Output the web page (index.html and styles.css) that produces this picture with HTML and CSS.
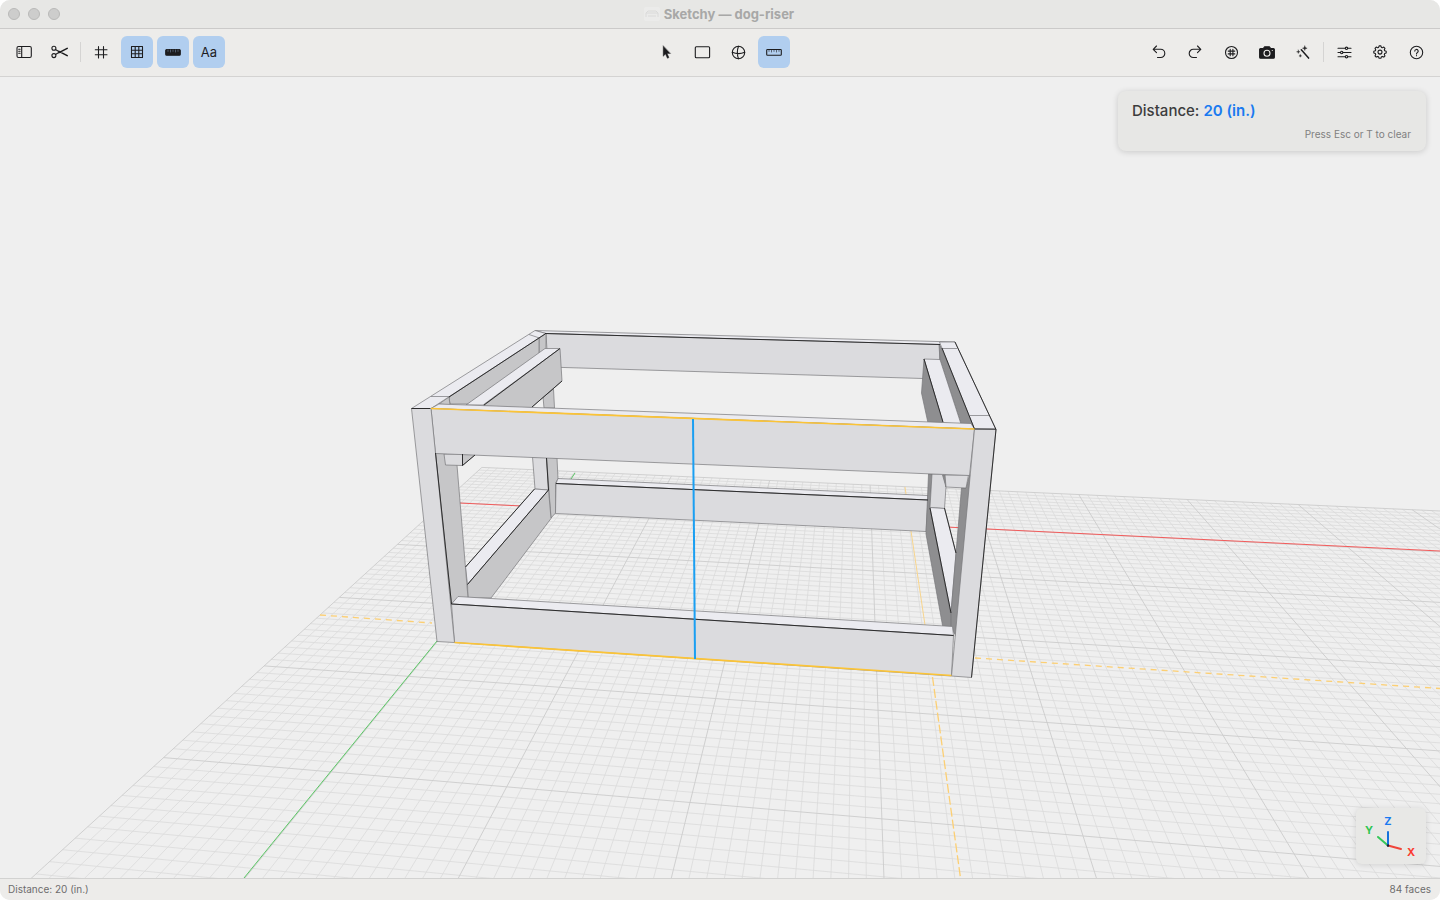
FILE: index.html
```html
<!DOCTYPE html>
<html lang="en">
<head>
<meta charset="utf-8">
<title>Sketchy — dog-riser</title>
<link rel="stylesheet" href="styles.css">
</head>
<body>
<div class="window">
  <header class="titlebar">
    <div class="lights">
      <button class="light" type="button" aria-label="Close"></button>
      <button class="light" type="button" aria-label="Minimize"></button>
      <button class="light" type="button" aria-label="Zoom"></button>
    </div>
    <h1 class="title">
      <svg class="doc-icon" viewBox="0 0 16 14" aria-hidden="true"><rect width="16" height="14" rx="2" fill="#ebebea"/><path d="M2 10V6l2-2h8l2 2v4M2 6h12M4 9h8" fill="none" stroke="#dadad9"/></svg>
      <span>Sketchy — dog-riser</span>
    </h1>
  </header>

  <nav class="toolbar" aria-label="Tools">
    <div class="tools">
      <button class="tool" type="button" aria-label="Sidebar"><svg class="icon" viewBox="0 0 20 20"><rect x="3" y="4.500" width="14.300" height="11" rx="1.500"/><path d="M7.700 4.500v11M4.700 7.200h1.400M4.700 9.200h1.400M4.700 11.200h1.400"/></svg></button>
      <button class="tool" type="button" aria-label="Cut"><svg class="icon" viewBox="0 0 20 20"><circle cx="3.900" cy="6.300" r="2"/><circle cx="3.900" cy="13.600" r="2"/><path d="M5.500 7.500 10 10.200M5.500 12.500 10 9.800"/><path d="m9 10.600 8.200-4.200M9 9.400l8.200 4.200" stroke-width="1.600"/></svg></button>
      <span class="divider"></span>
      <button class="tool" type="button" aria-label="Snap to grid"><svg class="icon" viewBox="0 0 20 20"><path d="M7.500 4.500v11.500M12.500 4.500v11.500M4.300 7.700h11.700M4.300 12.700h11.700"/></svg></button>
      <button class="tool tool-on" type="button" aria-pressed="true" aria-label="Grid"><svg class="icon" viewBox="0 0 20 20"><path d="M4.500 4.500h11v11h-11zM8.200 4.500v11M11.800 4.500v11M4.500 8.200h11M4.500 11.800h11"/></svg></button>
      <button class="tool tool-on" type="button" aria-pressed="true" aria-label="Dimensions"><svg class="icon" viewBox="0 0 20 20"><rect x="2.700" y="7.500" width="14.600" height="5.800" rx="1" fill="#1d1d1f"/><path d="M5 8v1.400M7.500 8v2M10 8v1.400M12.500 8v2M15 8v1.400" stroke="#7287a0" stroke-width=".6"/></svg></button>
      <button class="tool tool-on tool-text" type="button" aria-pressed="true">Aa</button>
    </div>
    <div class="tools">
      <button class="tool" type="button" aria-label="Select"><svg class="icon" viewBox="0 0 20 20"><path d="M7.200 4v10.300l2.300-2.200 1.900 4.200 1.600-.7-1.900-4.100h3.200z" fill="#1d1d1f" stroke="#1d1d1f" stroke-width=".4"/></svg></button>
      <button class="tool" type="button" aria-label="Rectangle"><svg class="icon" viewBox="0 0 20 20"><rect x="3.300" y="4.700" width="14.300" height="11" rx="1"/></svg></button>
      <button class="tool" type="button" aria-label="Orbit"><svg class="icon" viewBox="0 0 20 20"><circle cx="10.500" cy="10.500" r="6.200"/><path d="M10.500 4.300c-1.400 3.700-1.400 8.700 0 12.400M4.300 10.200c3.700 1.700 8.700 1.700 12.400 0"/></svg></button>
      <button class="tool tool-on" type="button" aria-pressed="true" aria-label="Measure"><svg class="icon" viewBox="0 0 20 20"><rect x="2.700" y="7.500" width="14.600" height="5.800" rx=".8"/><path d="M5 8v1.400M7.500 8v2M10 8v1.400M12.500 8v2M15 8v1.400" stroke-width=".6"/></svg></button>
    </div>
    <div class="tools tools-end">
      <button class="tool" type="button" aria-label="Undo"><svg class="icon" viewBox="0 0 20 20"><path d="M7.500 4 4.200 7.300l3.300 3.300M4.500 7.300h7.200a4 4 0 0 1 0 8.200H8.500"/></svg></button>
      <button class="tool" type="button" aria-label="Redo"><svg class="icon" viewBox="0 0 20 20"><path d="m12.500 4 3.300 3.300-3.300 3.300M15.500 7.300H8.300a4 4 0 0 0 0 8.200h3.200"/></svg></button>
      <button class="tool" type="button" aria-label="Units"><svg class="icon" viewBox="0 0 20 20"><circle cx="10.500" cy="10.500" r="6"/><path d="M9.200 7.200v6.600M11.900 7.200v6.600M7.200 9.100h6.600M7.200 11.900h6.600"/></svg></button>
      <button class="tool" type="button" aria-label="Camera"><svg class="icon" viewBox="0 0 20 20"><path d="M3.600 6.500h2.700l1.300-1.800h4.800l1.300 1.800h2.700a1 1 0 0 1 1 1v7.800a1 1 0 0 1-1 1H3.600a1 1 0 0 1-1-1V7.500a1 1 0 0 1 1-1z" fill="#1d1d1f"/><circle cx="10" cy="11.200" r="3" stroke="#edecea" stroke-width="1.100"/><circle cx="15.300" cy="8.500" r=".6" fill="#edecea" stroke="none"/></svg></button>
      <button class="tool" type="button" aria-label="Magic wand"><svg class="icon" viewBox="0 0 20 20"><path d="m8.300 7.800 7.300 8.300" stroke-width="1.500"/><path d="M11.800 3.800 12.400 5.600 14.200 6.200 12.400 6.800 11.800 8.600 11.200 6.800 9.400 6.200 11.200 5.600zM5.300 8l.4 1.400 1.400.4-1.400.4-.4 1.400-.4-1.400-1.400-.4 1.400-.4zM7.300 12.500l.3 1.100 1.100.3-1.100.3-.3 1.100-.3-1.100-1.100-.3 1.100-.3z" fill="#1d1d1f" stroke="#1d1d1f" stroke-width=".3"/></svg></button>
      <span class="divider"></span>
      <button class="tool" type="button" aria-label="Options"><svg class="icon" viewBox="0 0 20 20"><path d="M4 6.300h7.200M13.800 6.300H17M4 10.500h2.400M9 10.500h8M4 14.700h7.200M13.800 14.700H17"/><circle cx="12.500" cy="6.300" r="1.200"/><circle cx="7.700" cy="10.500" r="1.200"/><circle cx="12.500" cy="14.700" r="1.200"/></svg></button>
      <button class="tool" type="button" aria-label="Settings"><svg class="icon" viewBox="0 0 20 20"><circle cx="10" cy="10.100" r="2"/><path d="m8.600 5.400.5-1.500h1.800l.5 1.500 1 .4 1.400-.7 1.200 1.200-.7 1.400.4 1 1.500.5v1.800l-1.500.5-.4 1 .7 1.400-1.200 1.200-1.400-.7-1 .4-.5 1.500H9.100l-.5-1.500-1-.4-1.400.7L5 13.900l.7-1.400-.4-1L3.800 11V9.200l1.500-.5.4-1L5 6.300l1.200-1.200 1.400.7z"/></svg></button>
      <button class="tool" type="button" aria-label="Help"><svg class="icon" viewBox="0 0 20 20"><circle cx="10.500" cy="10.500" r="6.200"/><path d="M8.800 9.100a1.700 1.700 0 1 1 2.500 1.500c-.6.400-.8.700-.8 1.300M10.500 13.500v.3"/></svg></button>
    </div>
  </nav>

  <main class="viewport">
    <svg class="scene" viewBox="0 77 1440 801" preserveAspectRatio="xMidYMid slice" role="img" aria-label="3D model of a dog riser frame">
      <path id="grid-minor" class="grid-minor"/>
      <path id="grid-major" class="grid-major"/>
      <path class="axis-x" d="M459 503 522 506M946 527 1440 551"/>
      <path class="axis-y" d="M437 641 244 878M575 473 571 479"/>
      <path class="guide" d="M320 615 432 623M975 658 1440 688.500"/>
      <path class="guide guide-near" d="M932.500 677 960.500 878"/>
      <path class="guide-faint" d="M911 531 925 625M905 487 906 494"/>

      <g class="solid">
        <path class="top" d="M535 330.500 955 342 940 345 546 333.500z"/>
        <path class="front" d="M546 333.500 940 344.500 939 379 548 367z"/>
        <path class="left" d="M539 338 546 333.500V349L539 355z"/>
        <path class="left" d="M543 397 553.500 389 554.500 408 544 408z"/>
        <path class="left" d="M539 338 449 397 450 404H468L539 354z"/>
        <path class="left" d="M439 404 449 397 450 405z"/>
        <path class="top" d="M535 330.500 546 333.500 431 408.500 411.500 408.500z"/>
        <path class="top" d="M545 348.500H560L483 405H466z"/>
        <path class="left" d="M560 348.500 562 381 531 408 483 406z"/>

        <path class="right" d="M939 345 941 347 975 428 961 424 940 360z"/>
        <path class="top" d="M924 359 940 359.500 961 424 943 423z"/>
        <path class="right" d="M924 359 943 423H928L921.500 393z"/>
        <path class="top" d="M939.500 342H955L996 429.500 974.500 429z"/>

        <path class="front" d="M532.500 457 546.500 457 548.500 490 535 489z"/>
        <path class="left" d="M546.500 457 557 458 558 479 555.500 483V513L551 518z"/>
        <path class="top" d="M558 478.500 928 495.500V500L556 483.500z"/>
        <path class="front" d="M556 483.500 928 500 926 531.500 555.500 513.500z"/>
        <path class="top" d="M465.500 567 534.500 489 548.500 490 467.500 584.500z"/>
        <path class="left" d="M467.500 584.500 548.500 490 551 518.500 491 598H468z"/>

        <path class="right" d="M928.500 474H932L930 508 950.500 613V628H943L926 534z"/>
        <path class="front" d="M932 474H944L946 487 944.500 508.500 930 507.500z"/>
        <path class="top" d="M930 507.500 944.500 508.500 956 553.500 951 613z"/>
        <path class="right" d="M961.500 488 966 488 969.500 475 976 475 956 636 951 628V613L956 553z"/>
        <path class="right" d="M942.500 475H946V487z"/>
        <path class="front" d="M945 475H968.500L966 488 946 487z"/>

        <path class="left" d="M435.500 453H456L468 598H458L451.500 604z"/>
        <path class="left" d="M462 454H476L462.500 465.500z"/>
        <path class="front" d="M444 454H462.500V465.500L445.500 465z"/>

        <path class="top" d="M451.500 604 458 596.500 952.500 626.500 953.500 635.500z"/>
        <path class="front" d="M451.500 604 953.500 635.500 951.500 676 454.500 642.500z"/>
        <path class="top" d="M431 408.500 439 404 971 423.500 974.500 429z"/>
        <path class="front" d="M431 408.500 974.500 429 969.500 475.500 435.500 453.500z"/>
        <path class="front" d="M411.500 408.500H431L454.500 642.500 437 641.500z"/>
        <path class="front" d="M974.500 429 996 429.500 971.500 677.500 951.500 676z"/>
      </g>
      <path class="seam" d="M431 396.500H449.500M529 334.500 539.500 338M942.500 348.500H957M970 415.500H989.500"/>
      <path class="edge" d="M545 333.500 940 344.500M411.500 408.500H430M545 334 449 397M560 348.500 484 405M942 348 974.500 429M924 359 943 422M955 342 996 429.500 971.500 677.500M974.500 429H996M435.500 453 451.500 604M556 483.500 928 500M467.500 584.500 548.500 490M451.500 604 953.500 635.500M930 508 951 613M944.500 508 956 553M546.500 458 548.500 490M462.500 454V465.500L475 455M465.500 567 534.500 489M562 381 532 407"/>
      <path class="picked" d="M431 408.500 974.500 429M454.500 642.500 951.500 675.500"/>
      <path class="measure" d="M693 419 695 659"/>
    </svg>

    <section class="readout" aria-label="Measurement">
      <p class="readout-value">Distance: <strong>20 (in.)</strong></p>
      <p class="readout-hint">Press Esc or T to clear</p>
    </section>

    <div class="gizmo">
      <svg class="gizmo-art" viewBox="0 0 70 56" role="img" aria-label="Axis orientation">
        <path d="M32 37.500 22 29" stroke="#35c759"/>
        <path d="M32 37.500 45 41" stroke="#f0443a"/>
        <path d="M32 37.500V24" stroke="#1572dc"/>
        <circle cx="32" cy="37.500" r="1.200" fill="#223"/>
        <text x="32" y="17" fill="#1a7af0">Z</text>
        <text x="13" y="26" fill="#2fc552">Y</text>
        <text x="55" y="48" fill="#fb3b30">X</text>
      </svg>
    </div>
  </main>

  <footer class="statusbar">
    <span>Distance: 20 (in.)</span>
    <span>84 faces</span>
  </footer>
</div>
<script src="grid.js"></script>
</body>
</html>
```

FILE: styles.css
```css
* {
  box-sizing: border-box;
}

body {
  margin: 0;
  background: #fff;
  font-family: Inter, "Liberation Sans", sans-serif;
  color: #3c3c3d;
}

.window {
  display: flex;
  flex-direction: column;
  height: 100vh;
  overflow: hidden;
  border-radius: 10px;
  background: #efefef;
}

.titlebar {
  display: grid;
  grid-template-columns: 1fr auto 1fr;
  align-items: center;
  height: 29px;
  padding: 0 8px;
  background: #e7e7e5;
  border-bottom: 1px solid #cbcac9;
}

.lights {
  display: flex;
  gap: 8px;
}

.light {
  width: 12px;
  height: 12px;
  padding: 0;
  border: 1px solid #b9b9b8;
  border-radius: 50%;
  background: #cdcdcc;
}

.title {
  display: flex;
  align-items: center;
  gap: 4px;
  margin: 0;
  padding: 0 2px 1px 0;
  font-size: 13px;
  line-height: 16px;
  font-weight: 700;
  color: #a8a8a7;
}

.doc-icon {
  width: 16px;
  height: 14px;
}

.toolbar {
  display: grid;
  grid-template-columns: 1fr auto 1fr;
  align-items: center;
  height: 48px;
  padding: 0 8px 1px;
  background: #edecea;
  border-bottom: 1px solid #d4d3d2;
}

.tools {
  display: flex;
  align-items: center;
  gap: 4px;
}

.tools-end {
  justify-content: flex-end;
}

.tool {
  display: flex;
  align-items: center;
  justify-content: center;
  width: 32px;
  height: 32px;
  padding: 0;
  border: 0;
  border-radius: 6px;
  background: transparent;
  color: #1d1d1f;
  font: 400 13px/16px Inter, "Liberation Sans", sans-serif;
}

.tool-on {
  background: #b1ceef;
}

.icon {
  width: 20px;
  height: 20px;
  fill: none;
  stroke: #1d1d1f;
  stroke-width: 1.1;
  stroke-linecap: round;
  stroke-linejoin: round;
}

.divider {
  width: 1px;
  height: 20px;
  background: #d5d4d3;
}

.viewport {
  position: relative;
  flex: 1;
  min-height: 0;
  background: #efefef;
}

.scene {
  display: block;
  width: 100%;
  height: 100%;
  fill: none;
}

.grid-minor {
  stroke: #dbdbdb;
  stroke-width: 0.8;
}

.grid-major {
  stroke: #cccccc;
  stroke-width: 0.9;
}

.axis-x {
  stroke: #f25b5b;
}

.axis-y {
  stroke: #5bc765;
}

.guide {
  stroke: #fccf73;
  stroke-width: 1.3;
  stroke-dasharray: 6 5;
}

.guide-near {
  stroke-dasharray: 9 3;
}

.guide-faint {
  stroke: #f8d58d;
}

.solid {
  stroke: #77777a;
  stroke-width: 0.7;
  stroke-linejoin: round;
}

.top {
  fill: #ebebf0;
}

.front {
  fill: #dbdbde;
}

.left {
  fill: #c6c6c8;
}

.right {
  fill: #8e8e90;
}

.seam {
  stroke: #77777a;
  stroke-width: 0.7;
}

.edge {
  stroke: #141414;
  stroke-width: 0.8;
}

.picked {
  stroke: #fcc436;
  stroke-width: 1.7;
}

.measure {
  stroke: #1a9ff2;
  stroke-width: 2;
}

.readout {
  position: absolute;
  top: 14px;
  right: 14px;
  width: 308px;
  padding: 10px 15px 9px 14px;
  border-radius: 8px;
  background: #e7e7e5;
  box-shadow: 0 1px 6px rgba(0, 0, 0, 0.16);
}

.readout-value {
  margin: 0 0 6px;
  font-size: 15px;
  line-height: 20px;
  font-weight: 500;
}

.readout-value strong {
  font-weight: 600;
  color: #1a7af0;
}

.readout-hint {
  margin: 0;
  font-size: 10px;
  line-height: 15px;
  text-align: right;
  color: #808080;
}

.gizmo {
  position: absolute;
  right: 14px;
  bottom: 14px;
  border-radius: 6px;
  background: #e8e8e6;
  box-shadow: 0 1px 6px rgba(0, 0, 0, 0.13);
}

.gizmo-art {
  display: block;
  width: 70px;
  height: 56px;
  fill: none;
  stroke-width: 2;
  stroke-linecap: round;
}

.gizmo-art text {
  font-size: 11px;
  font-weight: 700;
  text-anchor: middle;
}

.statusbar {
  display: flex;
  align-items: center;
  justify-content: space-between;
  height: 22px;
  padding: 0 9px 1px 8px;
  background: #edecea;
  border-top: 1px solid #d2d2d1;
  font-size: 10px;
  line-height: 14px;
  color: #6d6d6d;
}
```

FILE: grid.js
```js
// Ground plane: one unit is a foot, each foot has twelve inch lines.
// [u, v, x, y] pairs tie plane coordinates to scene coordinates.
const anchors = [
  [-1, -1, 481.7, 467.7], [-1, 3, 265, 665.7], [-1, 4, 163.3, 757.3],
  [1, 3, 560, 686.7], [1, 4, 505.7, 786.7], [2, 3, 715, 699],
  [2, 4, 689, 802.7], [3, 3, 877.7, 710], [3, 4, 882.3, 819.3],
  [4, 2, 1022, 639.5], [4, 3, 1047.3, 722.3], [4, 4, 1085, 836.7],
  [5, -1, 1078.3, 495], [5, 2, 1173.3, 649.3], [5, 3, 1225.7, 735.7],
  [6, -1, 1187.3, 499.3], [6, 2, 1321.7, 660], [8, -1, 1413.3, 509.5]
];

// Least squares fit of the eight projection coefficients.
function fitProjection(points) {
  const n = 8;
  const m = Array.from({ length: n }, () => new Array(n + 1).fill(0));
  for (const [u, v, x, y] of points) {
    const rows = [
      [u, v, 1, 0, 0, 0, -u * x, -v * x, x],
      [0, 0, 0, u, v, 1, -u * y, -v * y, y]
    ];
    for (const r of rows)
      for (let i = 0; i < n; i++)
        for (let j = 0; j <= n; j++) m[i][j] += r[i] * r[j];
  }
  for (let i = 0; i < n; i++) {
    let p = i;
    for (let k = i + 1; k < n; k++) if (Math.abs(m[k][i]) > Math.abs(m[p][i])) p = k;
    [m[i], m[p]] = [m[p], m[i]];
    for (let k = 0; k < n; k++) {
      if (k === i) continue;
      const f = m[k][i] / m[i][i];
      for (let j = i; j <= n; j++) m[k][j] -= f * m[i][j];
    }
  }
  return m.map((row, i) => row[n] / row[i]);
}

const h = fitProjection(anchors);

function project(u, v) {
  const w = h[6] * u + h[7] * v + 1;
  return ((h[0] * u + h[1] * v + h[2]) / w).toFixed(1) + " " +
         ((h[3] * u + h[4] * v + h[5]) / w).toFixed(1);
}

const near = 5.5, far = -1, left = -1, right = 11;
let minor = "", major = "";
for (let i = left * 12; i <= right * 12; i++) {
  const d = "M" + project(i / 12, far) + "L" + project(i / 12, near);
  if (i % 12) minor += d; else major += d;
}
for (let i = far * 12; i <= near * 12; i++) {
  const d = "M" + project(left, i / 12) + "L" + project(right, i / 12);
  if (i % 12) minor += d; else major += d;
}
document.getElementById("grid-minor").setAttribute("d", minor);
document.getElementById("grid-major").setAttribute("d", major);
```
